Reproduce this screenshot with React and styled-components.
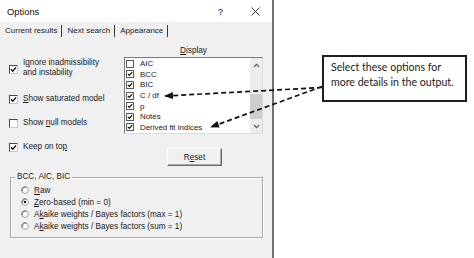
import React from "react";
import styled, { createGlobalStyle } from "styled-components";

const Global = createGlobalStyle`
  html, body { margin: 0; padding: 0; background: #fff; overflow: hidden; }
  #root { width: 474px; height: 258px; }
`;

const Stage = styled.div`
  position: relative;
  width: 474px;
  height: 258px;
  display: flex;
  background: #fff;
  font-family: "Liberation Sans", Arial, sans-serif;
  color: #1a1a1a;
`;

const Dialog = styled.div`
  width: 272px;
  height: 258px;
  border-right: 2px solid #707070;
  display: flex;
  flex-direction: column;
  background: #f0f0f0;
`;

const TitleBar = styled.div`
  height: 22px;
  flex: none;
  background: #fff;
  display: flex;
  align-items: center;
  padding: 0 12px 0 7px;
  font-size: 9.4px;
  color: #111;
`;

const Spacer = styled.div`
  flex: 1;
`;

const Help = styled.span`
  font-size: 9.4px;
  margin-right: 28px;
`;

const TabRow = styled.div`
  height: 18px;
  flex: none;
  display: flex;
  align-items: center;
  padding-left: 5px;
  font-size: 8px;
`;

const Tab = styled.span`
  line-height: 12px;
  padding-right: 4px;
  margin-right: 5px;
  border-right: 1px solid #3a3a3a;
`;

const Panel = styled.div`
  flex: 1;
  padding: 6px 0 0 9px;
  font-size: 8.2px;
`;

const TopGrid = styled.div`
  display: grid;
  grid-template-columns: 115px 139px;
`;

const LeftCol = styled.div`
  display: flex;
  flex-direction: column;
`;

const CheckRow = styled.label`
  display: flex;
  align-items: center;
  gap: 5px;
  margin-top: ${(p) => p.$mt}px;
  line-height: 10px;
`;

const BigBox = styled.span`
  flex: none;
  width: 9px;
  height: 9px;
  box-sizing: border-box;
  background: #fff;
  border: 1px solid;
  border-color: #4a4a4a #c8c8c8 #c8c8c8 #4a4a4a;
  display: flex;
  align-items: center;
  justify-content: center;
  margin-top: ${(p) => p.$mt || 0}px;
`;

const RightCol = styled.div`
  display: flex;
  flex-direction: column;
`;

const DisplayLabel = styled.div`
  text-align: center;
  line-height: 10px;
  height: 10px;
  margin-bottom: 1px;
`;

const ListBox = styled.div`
  height: 77px;
  box-sizing: border-box;
  background: #fff;
  border: 1px solid;
  border-color: #7a7a7a #dcdcdc #dcdcdc #7a7a7a;
  display: flex;
`;

const Items = styled.div`
  flex: 1;
  padding: 0.5px 0 0 1px;
  display: flex;
  flex-direction: column;
  font-size: 7.9px;
`;

const Item = styled.div`
  height: 10.6px;
  display: flex;
  align-items: center;
  gap: 6px;
  white-space: nowrap;
`;

const SmallBox = styled.span`
  flex: none;
  width: 8px;
  height: 8px;
  box-sizing: border-box;
  border: 1px solid #5a5a5a;
  background: #fff;
  display: flex;
  align-items: center;
  justify-content: center;
`;

const ScrollBar = styled.div`
  width: 12px;
  flex: none;
  background: #ececec;
  display: flex;
  flex-direction: column;
  align-items: center;
`;

const ScrollBtn = styled.div`
  height: 14px;
  width: 12px;
  flex: none;
  display: flex;
  align-items: center;
  justify-content: center;
`;

const Thumb = styled.div`
  width: 12px;
  height: 26px;
  margin-top: 22px;
  background: #cdcdcd;
`;

const Fill = styled.div`
  flex: 1;
`;

const ResetButton = styled.button`
  margin: 14px 0 0 43px;
  width: 55px;
  height: 18px;
  padding: 0;
  box-sizing: border-box;
  background: #f0f0f0;
  border: 1px solid;
  border-color: #fcfcfc #6a6a6a #6a6a6a #fcfcfc;
  box-shadow: inset -1px -1px 0 #a8a8a8;
  font-family: "Liberation Sans", Arial, sans-serif;
  font-size: 8.2px;
  color: #1a1a1a;
`;

const Group = styled.fieldset`
  margin: 6px 0 0 1px;
  padding: 0;
  width: 253px;
  box-sizing: border-box;
  min-inline-size: 0;
  border: 1px solid #a9a9a9;
  box-shadow: 1px 1px 0 #fff, inset 1px 1px 0 #fff;
`;

const Legend = styled.legend`
  margin-left: 4px;
  padding: 0 2px;
  line-height: 10px;
  font-size: 8.2px;
`;

const RadioList = styled.div`
  padding: 2px 0 5px 10px;
  display: flex;
  flex-direction: column;
`;

const RadioRow = styled.label`
  height: 12px;
  display: flex;
  align-items: center;
  gap: 5px;
  white-space: nowrap;
`;

const Right = styled.div`
  flex: 1;
  padding: 55px 0 0 48px;
`;

const Callout = styled.div`
  width: 145px;
  height: 47px;
  box-sizing: border-box;
  border: 2px solid #1e1e1e;
  padding: 3px 0 0 7px;
  font-family: Lato, "Open Sans", sans-serif;
  font-size: 10.6px;
  line-height: 15px;
  color: #1a1a1a;
`;

const Overlay = styled.svg`
  position: absolute;
  left: 0;
  top: 0;
  pointer-events: none;
`;

const U = styled.span`
  text-decoration: underline;
  text-underline-offset: 1px;
`;

const Tick = ({ size = 7 }) => (
  <svg width={size} height={size} viewBox="0 0 7 7">
    <path d="M1 3.3 L2.8 5.2 L6 1.4" fill="none" stroke="#111" strokeWidth="1.4" />
  </svg>
);

const Radio = ({ on }) => (
  <svg width="8" height="8" viewBox="0 0 8 8" style={{ flex: "none" }}>
    <circle cx="4" cy="4" r="3.4" fill="#fff" stroke="#9a9a9a" strokeWidth="0.9" />
    <path d="M1.2 5.4 A3.4 3.4 0 0 1 5.4 1.2" fill="none" stroke="#555" strokeWidth="0.9" />
    {on && <circle cx="4" cy="4" r="1.3" fill="#111" />}
  </svg>
);

const Chevron = ({ up }) => (
  <svg width="7" height="5" viewBox="0 0 7 5">
    <path d={up ? "M1 4 L3.5 1.3 L6 4" : "M1 1 L3.5 3.7 L6 1"} fill="none" stroke="#606060" strokeWidth="1.2" />
  </svg>
);

const listItems = [
  ["AIC", false],
  ["BCC", true],
  ["BIC", true],
  ["C / df", true],
  ["p", true],
  ["Notes", true],
  ["Derived fit indices", true],
];

export default function App() {
  return (
    <>
      <Global />
      <Stage>
        <Dialog>
          <TitleBar>
            <span>Options</span>
            <Spacer />
            <Help>?</Help>
            <svg width="9" height="9" viewBox="0 0 9 9">
              <path d="M0.5 0.5 L8.5 8.5 M8.5 0.5 L0.5 8.5" stroke="#222" strokeWidth="0.9" />
            </svg>
          </TitleBar>
          <TabRow>
            <Tab>Current results</Tab>
            <Tab>Next search</Tab>
            <Tab>Appearance</Tab>
          </TabRow>
          <Panel>
            <TopGrid>
              <LeftCol>
                <CheckRow $mt={12}>
                  <BigBox $mt={3}><Tick /></BigBox>
                  <span>
                    I<U>g</U>nore inadmissibility
                    <br />
                    and instability
                  </span>
                </CheckRow>
                <CheckRow $mt={16}>
                  <BigBox><Tick /></BigBox>
                  <span><U>S</U>how saturated model</span>
                </CheckRow>
                <CheckRow $mt={14}>
                  <BigBox />
                  <span>Show <U>n</U>ull models</span>
                </CheckRow>
                <CheckRow $mt={14}>
                  <BigBox><Tick /></BigBox>
                  <span>Keep on to<U>p</U></span>
                </CheckRow>
              </LeftCol>
              <RightCol>
                <DisplayLabel><U>D</U>isplay</DisplayLabel>
                <ListBox>
                  <Items>
                    {listItems.map(([label, on]) => (
                      <Item key={label}>
                        <SmallBox>{on && <Tick size={6} />}</SmallBox>
                        <span>{label}</span>
                      </Item>
                    ))}
                  </Items>
                  <ScrollBar>
                    <ScrollBtn><Chevron up /></ScrollBtn>
                    <Thumb />
                    <Fill />
                    <ScrollBtn><Chevron /></ScrollBtn>
                  </ScrollBar>
                </ListBox>
                <ResetButton>R<U>e</U>set</ResetButton>
              </RightCol>
            </TopGrid>
            <Group>
              <Legend>BCC, AIC, BIC</Legend>
              <RadioList>
                <RadioRow><Radio /><span><U>R</U>aw</span></RadioRow>
                <RadioRow><Radio on /><span><U>Z</U>ero-based (min = 0)</span></RadioRow>
                <RadioRow><Radio /><span>A<U>k</U>aike weights / Bayes factors (max = 1)</span></RadioRow>
                <RadioRow><Radio /><span>A<U>k</U>aike weights / Bayes factors (sum = 1)</span></RadioRow>
              </RadioList>
            </Group>
          </Panel>
        </Dialog>
        <Right>
          <Callout>
            Select these options for
            <br />
            more details in the output.
          </Callout>
        </Right>
        <Overlay width="474" height="258" viewBox="0 0 474 258">
          <defs>
            <marker id="ah" markerUnits="userSpaceOnUse" markerWidth="9" markerHeight="7" refX="8" refY="3.5" orient="auto">
              <path d="M0 0 L9 3.5 L0 7 Z" fill="#111" />
            </marker>
          </defs>
          <line x1="322" y1="87.5" x2="165" y2="96" stroke="#111" strokeWidth="1.7" strokeDasharray="5 3" markerEnd="url(#ah)" />
          <line x1="322" y1="86.5" x2="211" y2="127" stroke="#111" strokeWidth="1.7" strokeDasharray="5 3" markerEnd="url(#ah)" />
        </Overlay>
      </Stage>
    </>
  );
}
